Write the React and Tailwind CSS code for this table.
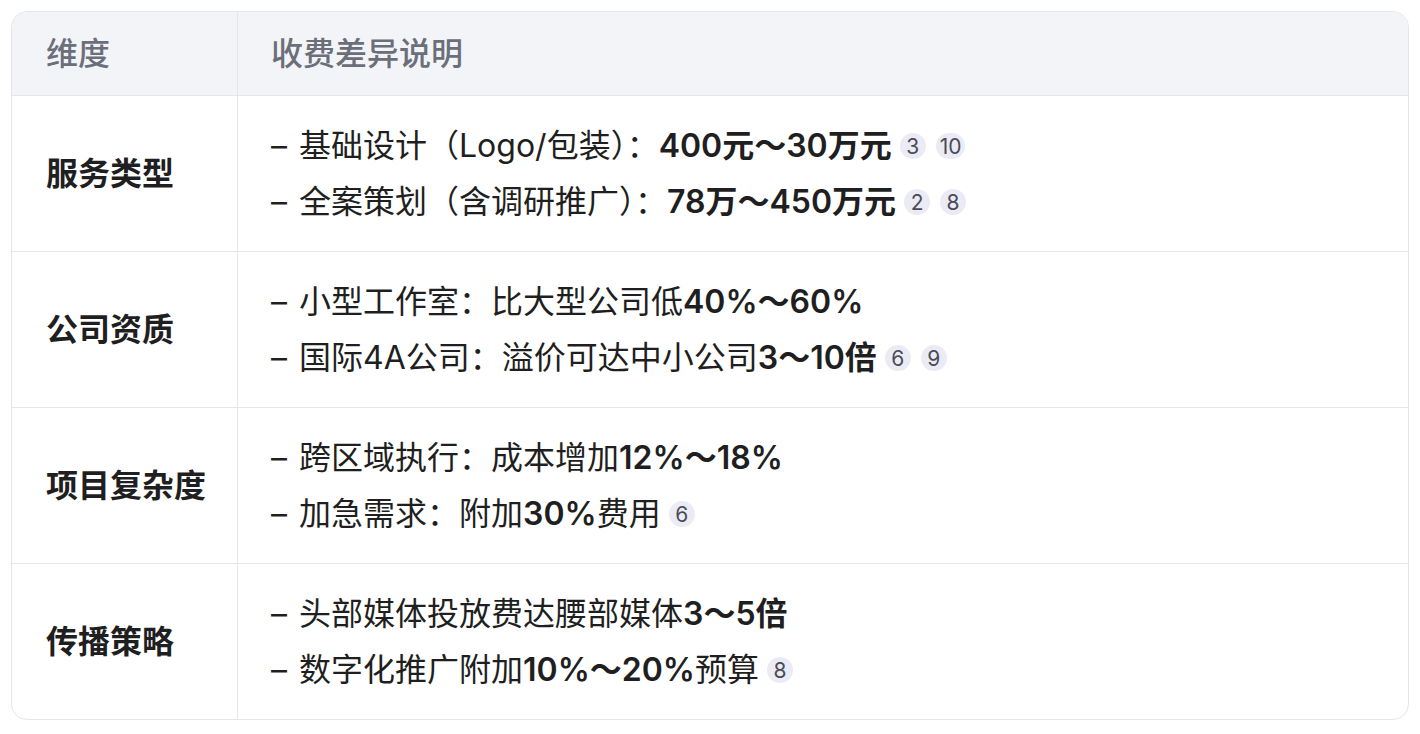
import React from 'react';

const rows = [
  {
    label: '服务类型',
    lines: [
      { text: '基础设计（Logo/包装）：', bold: '400元～30万元', refs: ['3', '10'] },
      { text: '全案策划（含调研推广）：', bold: '78万～450万元', refs: ['2', '8'] },
    ],
  },
  {
    label: '公司资质',
    lines: [
      { text: '小型工作室：比大型公司低', bold: '40%～60%', refs: [] },
      { text: '国际4A公司：溢价可达中小公司', bold: '3～10倍', refs: ['6', '9'] },
    ],
  },
  {
    label: '项目复杂度',
    lines: [
      { text: '跨区域执行：成本增加', bold: '12%～18%', refs: [] },
      { text: '加急需求：附加', bold: '30%', after: '费用', refs: ['6'] },
    ],
  },
  {
    label: '传播策略',
    lines: [
      { text: '头部媒体投放费达腰部媒体', bold: '3～5倍', refs: [] },
      { text: '数字化推广附加', bold: '10%～20%', after: '预算', refs: ['8'] },
    ],
  },
];

function Ref({ n }) {
  return (
    <span className="inline-flex items-center justify-center h-[26px] min-w-[26px] px-[4px] rounded-full bg-[#ebebf6] text-[21px] leading-none text-[#4b4b55] font-normal">
      {n}
    </span>
  );
}

export default function App() {
  return (
    <div className="min-h-screen bg-white p-[11px] font-['Inter','Noto_Sans_CJK_SC',sans-serif] text-[32px] leading-[56px] text-[#1f1f22]">
      <div className="rounded-[16px] border border-[#e5e6ea] overflow-hidden">
        <div className="flex bg-[#f3f4f7] border-b border-[#e5e6ea]">
          <div className="w-[226px] shrink-0 border-r border-[#e5e6ea] pl-[34px] pt-[14px] pb-[13px] text-[#6b6f7a] font-medium">
            维度
          </div>
          <div className="flex-1 pl-[33px] pt-[14px] pb-[13px] text-[#6b6f7a] font-medium">收费差异说明</div>
        </div>
        {rows.map((row, i) => (
          <div key={row.label} className={`flex ${i < rows.length - 1 ? 'border-b border-[#e5e6ea]' : ''}`}>
            <div className="w-[226px] shrink-0 border-r border-[#e5e6ea] pl-[34px] flex items-center font-bold">
              {row.label}
            </div>
            <div className="flex-1 pl-[33px] pt-[22px] pb-[21px]">
              {row.lines.map((line, j) => (
                <div key={j} className="flex items-center">
                  <span className="mr-[12px]">–</span>
                  <span>{line.text}</span>
                  <span className="font-semibold">{line.bold}</span>
                  {line.after && <span>{line.after}</span>}
                  {line.refs.length > 0 && (
                    <span className="ml-[8px] inline-flex gap-[10px]">
                      {line.refs.map((r) => (
                        <Ref key={r} n={r} />
                      ))}
                    </span>
                  )}
                </div>
              ))}
            </div>
          </div>
        ))}
      </div>
    </div>
  );
}
